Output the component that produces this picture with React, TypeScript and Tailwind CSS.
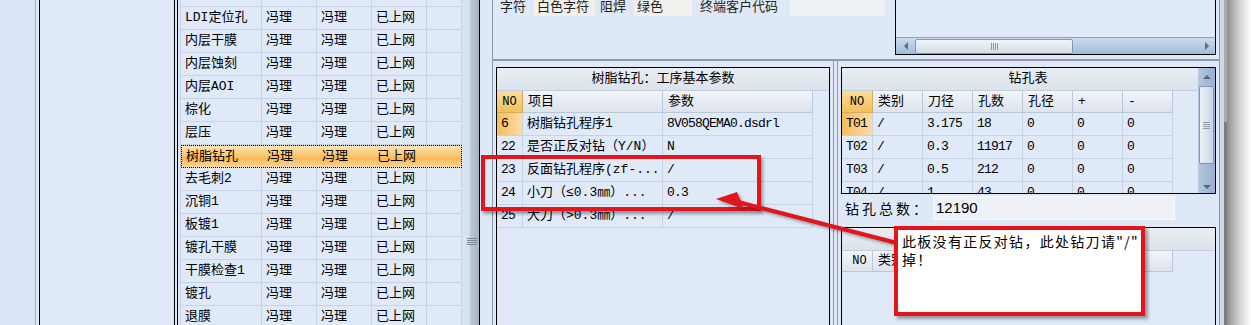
import React from 'react';

const steps = ['开料烘板', 'LDI定位孔', '内层干膜', '内层蚀刻', '内层AOI', '棕化', '层压', '树脂钻孔', '去毛刺2', '沉铜1', '板镀1', '镀孔干膜', '干膜检查1', '镀孔', '退膜'];
const stepWidths = ['w-[81px]', 'w-[55px]', 'w-[55px]', 'w-[55px]', 'w-[35px]'];

const params = [
  { no: '6', item: '树脂钻孔程序1', val: '8V058QEMA0.dsdrl' },
  { no: '22', item: '是否正反对钻（Y/N）', val: 'N' },
  { no: '23', item: '反面钻孔程序(zf-...', val: '/' },
  { no: '24', item: '小刀（≤0.3㎜）...', val: '0.3' },
  { no: '25', item: '大刀（>0.3㎜）...', val: '/' },
];

const drillCols = ['类别', '刀径', '孔数', '孔径', '+', '-'];
const drills = [
  ['T01', '/', '3.175', '18', '0', '0', '0'],
  ['T02', '/', '0.3', '11917', '0', '0', '0'],
  ['T03', '/', '0.5', '212', '0', '0', '0'],
  ['T04', '/', '1', '43', '0', '0', '0'],
];

// ascii-only cells get a tighter tracking so the mono latin reads like the half-width bitmap font
const tight = (s: string) => (/^[\x00-\x7f]*$/.test(s) ? 'tracking-[-0.8px]' : '');

const line = 'border-[#c6d3e4]';
const hdr = 'flex items-center pl-[5px] border-r border-b border-[#b9c7d9] bg-[linear-gradient(#f2f5f9,#dce3ed)]';
const hdrNo = 'flex items-center justify-center border-r border-b border-[#d7aa5c] bg-[linear-gradient(#fbdc98,#f4bf5e)] text-[12px]';
const titleBar = 'flex items-center justify-center border-b border-[#c3cedc] bg-[linear-gradient(#e9edf3,#dce3ec)]';
const curNo = 'bg-[linear-gradient(to_right,#f6bd5e,#fbdca6)]';

function StepGrid() {
  return (
    <div className="w-[282px] shrink-0 self-start mt-[-16px] border-l border-[#c3d0e1]">
      {steps.map((s) => {
        const sel = s === '树脂钻孔';
        const cells = [s, '冯理', '冯理', '已上网', ''];
        return (
          <div
            key={s}
            className={
              sel
                ? 'flex h-[23px] border border-dotted border-black bg-[linear-gradient(#fee5ae,#fbc66f_45%,#f8b85a_60%,#fcd797)]'
                : 'flex h-[23px] border-b border-[#c6d3e4] bg-[#dfe9f8]'
            }
          >
            {cells.map((c, j) => (
              <div
                key={j}
                className={`${stepWidths[j]} shrink-0 overflow-hidden whitespace-nowrap flex items-center pl-[4px] ${sel ? '' : 'border-r border-[#c6d3e4]'}`}
              >
                {c}
              </div>
            ))}
          </div>
        );
      })}
    </div>
  );
}

function Splitter() {
  return (
    <div className="w-[17px] shrink-0 pt-[238px] pl-[5px] bg-[linear-gradient(to_right,#dbe5f2_0px,#d3deec_8px,#bec8d6_8px,#a9b4c3_17px)]">
      <div className="flex flex-col gap-[1px] w-[10px]">
        {[0, 1, 2, 3].map((i) => (
          <div key={i} className="h-[1px] bg-[#7c899b]" />
        ))}
      </div>
    </div>
  );
}

function HScroll() {
  return (
    <div className="h-[17px] border-t border-[#8aa2c4] bg-[linear-gradient(#cddbee,#a3bbdb)] flex items-center">
      <div className="w-[19px] flex justify-center">
        <div className="w-0 h-0 border-y-[4px] border-y-transparent border-r-[4px] border-r-[#5a6b84]" />
      </div>
      <div className="w-[158px] h-[15px] rounded-[2px] border border-[#8097b8] bg-[linear-gradient(#f3f6fa,#d2dcea)] flex items-center justify-center gap-[1px]">
        {[0, 1, 2, 3].map((i) => (
          <div key={i} className="w-[1px] h-[7px] bg-[#8a9ab0]" />
        ))}
      </div>
      <div className="flex-1" />
      <div className="w-[16px] flex justify-center">
        <div className="w-0 h-0 border-y-[4px] border-y-transparent border-l-[4px] border-l-[#5a6b84]" />
      </div>
    </div>
  );
}

function VScroll() {
  return (
    <div className="w-[17px] shrink-0 flex flex-col items-center bg-[linear-gradient(to_right,#b5c8e2,#97afd2)]">
      <div className="h-[18px] flex items-center justify-center">
        <div className="w-0 h-0 border-x-[4px] border-x-transparent border-b-[4px] border-b-[#54647b]" />
      </div>
      <div className="w-[15px] h-[78px] rounded-[2px] border border-[#7f95b5] bg-[linear-gradient(to_right,#eef2f8,#c9d5e5)] flex flex-col items-center justify-center gap-[1px]">
        {[0, 1, 2, 3].map((i) => (
          <div key={i} className="w-[7px] h-[1px] bg-[#8a9ab0]" />
        ))}
      </div>
      <div className="flex-1" />
      <div className="h-[12px] flex items-center justify-center">
        <div className="w-0 h-0 border-x-[4px] border-x-transparent border-t-[4px] border-t-[#54647b]" />
      </div>
    </div>
  );
}

function ParamPanel() {
  return (
    <div className="h-[300px] border border-black flex flex-col bg-[#dfe9f8]">
      <div className={`h-[23px] shrink-0 ${titleBar}`}>树脂钻孔：工序基本参数</div>
      <div className="flex h-[22px] shrink-0">
        <div className={`w-[26px] ${hdrNo}`}>NO</div>
        <div className={`w-[140px] ${hdr}`}>项目</div>
        <div className={`w-[150px] ${hdr}`}>参数</div>
      </div>
      {params.map((p, i) => (
        <div key={p.no} className={`flex w-[316px] h-[23px] shrink-0 border-b ${line}`}>
          <div className={`w-[26px] border-r ${line} flex items-center pl-[4px] ${tight(p.no)} ${i === 0 ? curNo : ''}`}>{p.no}</div>
          <div className={`w-[140px] border-r ${line} flex items-center pl-[4px] whitespace-nowrap overflow-hidden`}>{p.item}</div>
          <div className={`w-[150px] border-r ${line} flex items-center pl-[4px] whitespace-nowrap overflow-hidden ${tight(p.val)}`}>{p.val}</div>
        </div>
      ))}
    </div>
  );
}

function DrillPanel() {
  return (
    <div className="h-[127px] shrink-0 border border-black flex overflow-hidden bg-[#dfe9f8]">
      <div className="w-[356px] flex flex-col">
        <div className={`h-[23px] shrink-0 pl-[16px] ${titleBar}`}>钻孔表</div>
        <div className="flex h-[22px] shrink-0">
          <div className={`w-[31px] ${hdrNo}`}>NO</div>
          {drillCols.map((c) => (
            <div key={c} className={`w-[50px] ${hdr}`}>{c}</div>
          ))}
        </div>
        {drills.map((r, i) => (
          <div key={r[0]} className={`flex w-[331px] h-[23px] shrink-0 border-b ${line}`}>
            {r.map((c, j) => (
              <div
                key={j}
                className={`${j === 0 ? 'w-[31px]' : 'w-[50px]'} shrink-0 border-r ${line} flex items-center pl-[4px] ${tight(c)} ${j === 0 && i === 0 ? curNo : ''}`}
              >
                {c}
              </div>
            ))}
          </div>
        ))}
      </div>
      <VScroll />
    </div>
  );
}

function SecondPanel() {
  return (
    <div className="mt-[7px] h-[120px] shrink-0 border border-black flex flex-col bg-[#dfe9f8]">
      <div className={`h-[23px] shrink-0 ${titleBar}`} />
      <div className="flex h-[21px] shrink-0">
        <div className={`w-[31px] ${hdr} pl-0 justify-center text-[12px]`}>NO</div>
        {drillCols.map((c) => (
          <div key={c} className={`w-[50px] ${hdr}`}>{c}</div>
        ))}
      </div>
    </div>
  );
}

function RightEdge() {
  return (
    <div className="w-[31px] shrink-0 flex">
      <div className="w-[4px] bg-[#d2d9e2]" />
      <div className="w-[3px] flex flex-col">
        <div className="h-[122px] bg-[#a9a9a9]" />
        <div className="flex-1 bg-[#7d7d7d]" />
      </div>
      <div className="flex-1 bg-[linear-gradient(to_right,#8f8f8f,#d6d6d6_55%,#ffffff)]" />
    </div>
  );
}

export default function App() {
  return (
    <div className="relative w-[1251px] h-[325px] overflow-hidden flex bg-[#dfe8f6] text-[13px] text-black font-['Liberation_Mono','Noto_Sans_CJK_SC',monospace]">
      <div className="w-[36px] shrink-0 border-r border-[#9cadc4] bg-[#d9e5f6]" />
      <div className="w-[3px] shrink-0" />
      <div className="w-[136px] shrink-0 border-x border-black bg-[#dfe9f8]" />
      <div className="w-[3px] shrink-0 border-r border-black" />
      <div className="w-[2px] shrink-0" />
      <StepGrid />
      <Splitter />

      <div className="shrink-0 flex border-l border-black pl-[12px]">
        <div className="w-[728px] flex flex-col">
          <div className="h-[61px] shrink-0 flex items-start border-x border-b-2 border-[#8d98a8] font-['Noto_Sans_CJK_SC',sans-serif] text-[#222]">
            <div className="flex items-center h-[21px] mt-[-5px] pl-[7px]">
              <span className="w-[34px]">字符</span>
              <div className="w-[61px] h-full bg-[#f1f0ec] flex items-center pl-[3px]">白色字符</div>
              <span className="w-[34px] ml-[5px]">阻焊</span>
              <div className="w-[58px] h-full bg-[#f1f0ec] flex items-center pl-[3px]">绿色</div>
              <span className="w-[90px] ml-[8px]">终端客户代码</span>
              <div className="w-[95px] h-full bg-[#eef1f4]" />
            </div>
            <div className="ml-auto mr-[3px] mt-[-10px] w-[321px] h-[65px] border-x border-b border-black bg-[#dfe9f7] flex flex-col justify-end">
              <HScroll />
            </div>
          </div>

          <div className="flex flex-1">
            <div className="w-[342px] shrink-0 border-x border-[#8d98a8] px-[3px] pt-[6px]">
              <ParamPanel />
            </div>
            <div className="w-[3px] shrink-0" />
            <div className="w-[383px] shrink-0 border-x border-[#8d98a8] px-[3px] pt-[6px] flex flex-col">
              <DrillPanel />
              <div className="h-[24px] mt-[2px] shrink-0 flex items-center pl-[4px]">
                <span className="w-[88px] text-[14px] tracking-[3px] font-['Noto_Sans_CJK_SC',sans-serif]">钻孔总数：</span>
                <div className="w-[242px] h-full bg-[#eef1f5] border border-[#f7f9fb] flex items-center pl-[2px] font-['Liberation_Sans',sans-serif] text-[15px]">
                  12190
                </div>
              </div>
              <SecondPanel />
            </div>
          </div>
        </div>
      </div>

      <RightEdge />

      <div className="absolute left-[481px] top-[155px] w-[280px] h-[56px] border-4 border-[#e3151c] shadow-[2px_3px_3px_rgba(0,0,0,0.35)]" />
      <svg
        className="absolute left-0 top-0 pointer-events-none drop-shadow-[2px_2px_1.5px_rgba(0,0,0,0.35)]"
        width="1251"
        height="325"
      >
        <line x1="738" y1="202" x2="897" y2="243" stroke="#e3151c" strokeWidth="4" />
        <polygon points="716,199 737,192 744,209" fill="#e3151c" />
      </svg>
      <div className="absolute left-[894px] top-[226px] w-[251px] h-[90px] border-4 border-[#e3151c] bg-white shadow-[3px_3px_3px_rgba(0,0,0,0.35)] font-['Noto_Sans_CJK_SC',sans-serif] text-[14px] tracking-[1.3px] leading-[18px] pl-[4px] pt-[2px] whitespace-nowrap">
        此板没有正反对钻，此处钻刀请"/"
        <br />
        掉！
      </div>
    </div>
  );
}
